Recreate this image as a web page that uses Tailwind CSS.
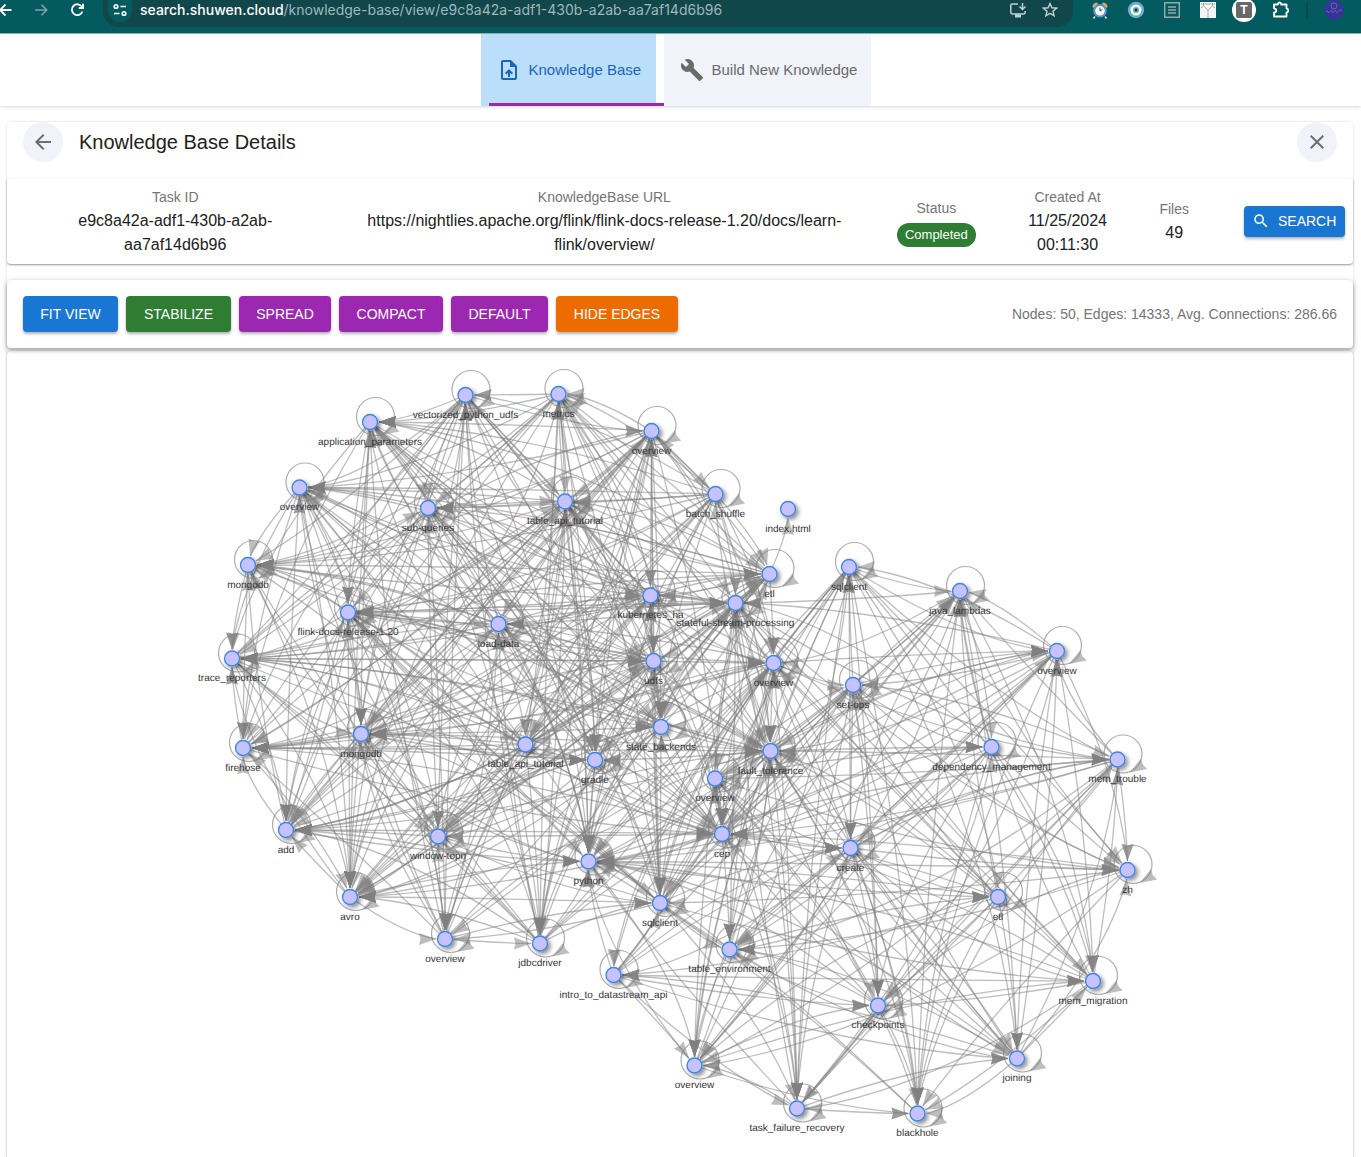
<!DOCTYPE html>
<html lang="en">
<head>
<meta charset="utf-8">
<meta name="viewport" content="width=device-width, initial-scale=1">
<title>Knowledge Base Details</title>
<script src="https://cdn.jsdelivr.net/npm/@tailwindcss/browser@4"></script>
</head>
<body class="min-h-screen overflow-x-hidden bg-white font-['Liberation_Sans',Arial,sans-serif] text-[#212121]">

<!-- Browser toolbar -->
<div class="flex h-[34px] items-start border-b border-[#8fb5b8] bg-[#035a5f] text-white">
  <div class="flex h-5 w-[103px] shrink-0 items-center">
    <button aria-label="Back" class="w-4"><svg class="h-4 w-4" viewBox="0 0 16 16" fill="none" stroke="#fff" stroke-width="1.8"><path d="M11.500 8H0M5.500 2.500 0 8l5.500 5.500"/></svg></button>
    <button aria-label="Forward" class="ml-[17px] w-4"><svg class="h-4 w-4" viewBox="0 0 16 16" fill="none" stroke="#7fa3a5" stroke-width="1.600"><path d="M2 8h11.500M8.500 2.800 13.700 8l-5.200 5.200"/></svg></button>
    <button aria-label="Reload" class="ml-5 w-4"><svg class="h-4 w-4" viewBox="0 0 16 16" fill="none" stroke="#fff" stroke-width="1.800"><path d="M13 5A5.400 5.400 0 1 0 13.400 9.500"/><path d="M14 1.800V6H9.800" /></svg></button>
  </div>
  <div class="flex h-[27px] min-w-0 flex-1 items-start rounded-b-2xl bg-[#11464b] pr-[15px]">
    <button aria-label="Site information" class="ml-[5px] flex h-[22px] w-6 shrink-0 items-end justify-center rounded-b-full bg-[#035a5f] pb-1"><svg class="h-4 w-4" viewBox="0 0 16 16" fill="none" stroke="#fff" stroke-width="1.600"><circle cx="4" cy="4.500" r="1.800"/><path d="M8.500 4.500h5.500M2 11.500h5.500"/><circle cx="12" cy="11.500" r="1.800"/></svg></button>
    <a href="#" class="ml-2 truncate font-['Inter',sans-serif] text-sm leading-5 text-[#9fb8ba]"><span class="font-medium text-white">search.shuwen.cloud</span>/knowledge-base/view/e9c8a42a-adf1-430b-a2ab-aa7af14d6b96</a>
    <div class="ml-auto flex h-5 shrink-0 items-center gap-4">
      <button aria-label="Install app"><svg class="h-4 w-4" viewBox="0 0 16 16" fill="none" stroke="#c3d0d1" stroke-width="1.500"><path d="M8 2H2.200Q.800 2 .800 3.400v7.200Q.800 12 2.200 12h11.600q1.400 0 1.400-1.400V9"/><path d="M5 14h6" stroke-width="3"/><path d="M12.500 1v6M9.500 4.500l3 3 3-3"/></svg></button>
      <button aria-label="Bookmark"><svg class="h-4 w-4" viewBox="0 0 16 16" fill="none" stroke="#c3d0d1" stroke-width="1.400"><path d="m8 1.500 1.900 4.300 4.700.4-3.600 3.100 1.100 4.600L8 11.400l-4.100 2.500L5 9.300 1.400 6.200l4.700-.4z"/></svg></button>
    </div>
  </div>
  <div class="flex h-5 shrink-0 items-center">
    <button aria-label="Alarm extension" class="ml-[18px]"><svg class="h-[18px] w-[18px]" viewBox="0 0 18 18"><path d="M4 15.500 2.500 17.500M14 15.500l1.500 2" stroke="#c9d8ee" stroke-width="1.800"/><path d="M1.500 6Q1.500 2 6 1.500l1 1.500-4 4zM16.500 6q0-4-4.500-4.500L11 3l4 4z" fill="#e9a84d"/><circle cx="9" cy="9.800" r="5.800" fill="#f3f8ff" stroke="#6490cf" stroke-width="2"/><path d="M9 6.500V10l2.400-1.500" fill="none" stroke="#444" stroke-width="1"/></svg></button>
    <button aria-label="Eye extension" class="ml-[18px]"><svg class="h-[18px] w-[18px]" viewBox="0 0 18 18"><circle cx="9" cy="9" r="8.200" fill="#6fa8cc"/><circle cx="9" cy="9" r="5.600" fill="#f4fbfa"/><circle cx="9" cy="9" r="3" fill="#4bb3a0"/><circle cx="9" cy="9" r="1.400" fill="#334"/></svg></button>
    <button aria-label="Reader extension" class="ml-[18px]"><svg class="h-[18px] w-[18px]" viewBox="0 0 18 18" fill="none" stroke="#9aa9aa" stroke-width="1.400"><path d="M1.700 1.700h14.600v14.600H1.700zM5 6h8M5 9h8M5 12h8"/></svg></button>
    <button aria-label="Tree extension" class="ml-[18px]"><svg class="h-[18px] w-[18px]" viewBox="0 0 18 18"><path d="M1 1h16v16H1z" fill="#f5f5f5"/><path d="M9 17V9L4.500 5M9 9l4.500-4M4.500 5 2 7M4.500 5V2M13.500 5l2.500 2M13.500 5V2M2 3h14" fill="none" stroke="#9a9a9a" stroke-width=".8"/></svg></button>
    <button aria-label="Text extension" class="ml-[15px] flex h-6 w-6 items-center justify-center rounded-full bg-white"><span class="flex h-4 w-4 items-center justify-center rounded-xs bg-[#686868] text-xs font-bold text-white">T</span></button>
    <button aria-label="Extensions" class="ml-4"><svg class="h-[18px] w-[18px]" viewBox="0 0 18 18" fill="none" stroke="#fff" stroke-width="1.800"><path d="M2 3.500h3.800q.3-2 1.700-2t1.700 2h5.300v4q1.800.3 1.800 1.900t-1.800 1.900v4.200H2v-3.800q2.300-.4 2.300-2.200T2 7.300z" stroke-linejoin="round"/></svg></button>
    <span class="ml-4 h-4 w-0.5 bg-[#11464b]"></span>
    <button aria-label="Profile" class="mr-[17px] ml-4 flex h-5 w-5 items-center justify-center rounded-full bg-[#34349a]"><svg class="h-5 w-5" viewBox="0 0 20 20" fill="none" stroke="#7772ad" stroke-width=".8"><circle cx="10" cy="6" r="3"/><path d="M2 12q1.500-2 2 0t2-.5 2 0 2 0 2 0 2 0 4-1"/></svg></button>
  </div>
</div>

<!-- Section tabs -->
<nav class="flex h-[72px] justify-center gap-2 pr-2.5 shadow-[0_1px_3px_rgba(0,0,0,0.16)]">
  <div class="relative flex">
    <button class="flex w-[175px] items-center bg-[#bbdefb] pl-4 text-[15px] text-[#1c64bd]">
      <svg class="h-6 w-6" viewBox="0 0 24 24" fill="currentColor"><path d="M14 2H6c-1.100 0-2 .9-2 2v16c0 1.100.9 2 2 2h12c1.100 0 2-.9 2-2V8zm4 18H6V4h7v5h5zM8 15.010l1.410 1.410L11 14.840V19h2v-4.160l1.590 1.590L16 15.010 12.010 11z"/></svg>
      <span class="ml-2">Knowledge Base</span>
    </button>
    <span class="absolute bottom-0 left-2 h-[3px] w-full bg-[#9c27b0]"></span>
  </div>
  <button class="flex w-[207px] items-center bg-[#f0f3f9] pl-4 text-[15px] text-[#6b6b6c]">
    <svg class="h-6 w-6" viewBox="0 0 24 24" fill="currentColor"><path d="m22.700 19-9.100-9.100c.9-2.300.4-5-1.500-6.900-2-2-5-2.400-7.400-1.300L9 6 6 9 1.600 4.700C.4 7.100.9 10.100 2.900 12.100c1.900 1.900 4.600 2.400 6.900 1.500l9.100 9.100c.4.400 1 .4 1.400 0l2.300-2.300c.5-.4.500-1.100.1-1.400z"/></svg>
    <span class="ml-2 whitespace-nowrap">Build New Knowledge</span>
  </button>
</nav>

<main class="mt-4 mr-2 ml-[7px] rounded-t shadow-[0_0_3px_rgba(0,0,0,0.16)]">
  <header class="flex h-14 items-start px-4">
    <button aria-label="Go back" class="flex h-10 w-10 items-center justify-center rounded-full bg-[#f0f3f9]"><svg class="h-6 w-6" viewBox="0 0 24 24" fill="#6e6e6f"><path d="M20 11H7.830l5.590-5.590L12 4l-8 8 8 8 1.410-1.410L7.830 13H20z"/></svg></button>
    <h1 class="ml-4 text-xl leading-10">Knowledge Base Details</h1>
    <button aria-label="Close" class="ml-auto flex h-10 w-10 items-center justify-center rounded-full bg-[#f0f3f9]"><svg class="h-6 w-6" viewBox="0 0 24 24" fill="#6e6e6f"><path d="M19 6.410 17.590 5 12 10.590 6.410 5 5 6.410 10.590 12 5 17.590 6.410 19 12 13.410 17.590 19 19 17.590 13.410 12z"/></svg></button>
  </header>

  <section class="grid h-[86px] grid-cols-[336fr_521fr_142fr_120fr_93fr_132fr] items-center rounded text-center leading-6 shadow-[0_1px_2px_rgba(0,0,0,0.42)]">
    <div class="px-8"><p class="text-sm leading-6 text-[#757575]">Task ID</p><p>e9c8a42a-adf1-430b-a2ab-aa7af14d6b96</p></div>
    <div class="px-4"><p class="text-sm leading-6 text-[#757575]">KnowledgeBase URL</p><p>https://nightlies.apache.org/flink/flink-docs-release-1.20/docs/learn-flink/overview/</p></div>
    <div class="flex flex-col items-center gap-[3px]"><p class="text-sm leading-6 text-[#757575]">Status</p><span class="h-6 rounded-full bg-[#2e7d32] px-2 text-[13px] leading-6 text-white">Completed</span></div>
    <div class="px-5"><p class="text-sm leading-6 text-[#757575]">Created At</p><p>11/25/2024 00:11:30</p></div>
    <div><p class="text-sm leading-6 text-[#757575]">Files</p><p>49</p></div>
    <div class="flex justify-end pr-2"><button class="flex h-[31px] w-[101px] items-center rounded bg-[#1976d2] pl-2 text-sm text-white shadow-[0_2px_3px_rgba(0,0,0,0.3)]">
      <svg class="h-[18px] w-[18px]" viewBox="0 0 24 24" fill="currentColor"><path d="M15.500 14h-.79l-.28-.27C15.410 12.590 16 11.110 16 9.500 16 5.910 13.090 3 9.500 3S3 5.910 3 9.500 5.910 16 9.500 16c1.610 0 3.090-.59 4.230-1.570l.27.28v.79l5 4.990L20.490 19zm-6 0C7.010 14 5 11.990 5 9.500S7.010 5 9.500 5 14 7.010 14 9.500 11.990 14 9.500 14z"/></svg>
      <span class="ml-2">SEARCH</span></button></div>
  </section>

  <section class="mt-4 flex h-[68px] items-center gap-2 rounded px-4 text-sm text-white shadow-[0_2px_4px_rgba(0,0,0,0.35),0_1px_8px_rgba(0,0,0,0.1)]">
    <button class="h-9 w-[95px] rounded bg-[#1976d2] shadow-[0_2px_3px_rgba(0,0,0,0.3)]">FIT VIEW</button>
    <button class="h-9 w-[105px] rounded bg-[#2e7d32] shadow-[0_2px_3px_rgba(0,0,0,0.3)]">STABILIZE</button>
    <button class="h-9 w-[92px] rounded bg-[#9c27b0] shadow-[0_2px_3px_rgba(0,0,0,0.3)]">SPREAD</button>
    <button class="h-9 w-[104px] rounded bg-[#9c27b0] shadow-[0_2px_3px_rgba(0,0,0,0.3)]">COMPACT</button>
    <button class="h-9 w-[97px] rounded bg-[#9c27b0] shadow-[0_2px_3px_rgba(0,0,0,0.3)]">DEFAULT</button>
    <button class="h-9 w-[122px] rounded bg-[#ed6c02] shadow-[0_2px_3px_rgba(0,0,0,0.3)]">HIDE EDGES</button>
    <p class="ml-auto text-[#757575]">Nodes: 50, Edges: 14333, Avg. Connections: 286.66</p>
  </section>

  <svg id="graph" class="mt-[3px] block w-full rounded-t font-['Liberation_Sans',Arial,sans-serif] text-[10px] shadow-[0_0_2px_rgba(0,0,0,0.3)]" viewBox="7 351 1346 806" role="img" aria-label="Knowledge graph">
    <defs><filter id="soft" x="-50%" y="-50%" width="220%" height="220%"><feDropShadow dx="2.500" dy="2.500" stdDeviation="2" flood-color="#000" flood-opacity=".45"/></filter></defs>
  </svg>
</main>

<script>
// name, x, y, group (L left, R right, B both), share of edges that point at the node
const nodes = [
  ['vectorized_python_udfs',465.500,395,'L',.4],['metrics',558.500,394,'L',.15],['application_parameters',370,422,'L',.4],
  ['overview',651.500,431,'L',.2],['overview',299.500,487.500,'L',.4],['sub-queries',428,508,'L',.6],['table_api_tutorial',565,501.500,'L',.5],
  ['batch_shuffle',715.500,494,'L',.01],['index.html',788,509,'N',0],['mongodb',248,565,'L',.8],['etl',769.500,574,'L',.25],
  ['sqlclient',849,567,'R',.1],['java_lambdas',960,591,'R',.6],['kubernetes_ha',650.500,595.500,'L',.6],
  ['stateful-stream-processing',735.500,603,'B',.5],['flink-docs-release-1.20',348,612.500,'L',.8],['load-data',498.500,624,'L',.5],
  ['overview',1057,651,'R',.3],['trace_reporters',232,658.500,'L',.7],['udfs',653.500,661,'L',.6],['overview',773.500,663,'B',.5],
  ['set-ops',853,685,'R',.3],['state_backends',661,727,'L',.5],['mongodb',361,734,'L',1.100],['firehose',243,748,'L',1],
  ['table_api_tutorial',525.500,744.500,'L',.03],['fault_tolerance',770.500,751,'B',.55],['dependency_management',991.500,747,'R',.6],
  ['gradle',595,760,'L',.5],['mem_trouble',1117.500,759.500,'R',.4],['overview',715,778.500,'R',.2],['add',286,830,'L',1],
  ['window-topn',438,836.500,'L',.3],['cep',722,834,'B',.6],['create',850.500,848,'R',.5],['python',588.500,861.500,'B',8],
  ['zh',1127.500,870,'R',.9],['avro',350,897,'L',1.600],['etl',998,897,'R',.25],['sqlclient',660,903,'B',.3],['overview',445,939,'L',.15],
  ['jdbcdriver',540,943.500,'L',.25],['table_environment',729.500,949.500,'R',.9],['intro_to_datastream_api',613.500,975,'R',.2],
  ['mem_migration',1093,981,'R',.65],['checkpoints',878,1005.500,'R',.5],['joining',1017,1058.500,'R',.7],
  ['overview',694.500,1065.500,'R',1],['task_failure_recovery',797,1108.500,'R',.6],['blackhole',917.500,1113.500,'R',1.200]
];
let seed = 20241125;
const rnd = () => { seed = (seed * 1664525 + 1013904223) % 4294967296; return seed / 4294967296; };
const svg = document.getElementById('graph');
const add = (tag, attrs, text) => {
  const e = document.createElementNS('http://www.w3.org/2000/svg', tag);
  for (const k in attrs) e.setAttribute(k, attrs[k]);
  if (text) e.textContent = text;
  svg.appendChild(e);
};
const arrow = (x, y, a) => {
  const p = (d, w) => (x - d * Math.cos(a) - w * Math.sin(a)) + ',' + (y - d * Math.sin(a) + w * Math.cos(a));
  add('polygon', {points: [x + ',' + y, p(17, 6), p(15.500, 0), p(17, -6)].join(' '), fill: '#808080', 'fill-opacity': .52});
};
// quadratic curve that leaves at 45 degrees and settles on the target's axis
function edge(f, t) {
  const dx = t[1] - f[1], dy = t[2] - f[2], ax = Math.abs(dx), ay = Math.abs(dy), s = Math.max(ax, ay) * .55;
  const vx = f[1] + Math.sign(dx) * (ax <= ay ? Math.min(s, ax) : s);
  const vy = f[2] + Math.sign(dy) * (ax <= ay ? s : Math.min(s, ay));
  const a = Math.atan2(t[2] - vy, t[1] - vx), ex = t[1] - 9 * Math.cos(a), ey = t[2] - 9 * Math.sin(a);
  // pull the control point part of the way back to the straight line
  const cx = vx * .7 + (f[1] + t[1]) * .15, cy = vy * .7 + (f[2] + t[2]) * .15;
  add('path', {d: `M${f[1]} ${f[2]}Q${cx} ${cy} ${ex} ${ey}`, fill: 'none', stroke: '#808080', 'stroke-opacity': .52, 'stroke-width': 1.300});
  arrow(ex, ey, a);
}
for (let i = 0; i < nodes.length; i++) for (let j = i + 1; j < nodes.length; j++) {
  const a = nodes[i], b = nodes[j];
  if (a[3] === 'N' || b[3] === 'N') continue;
  const same = a[3] === b[3] || a[3] === 'B' || b[3] === 'B';
  const near = Math.hypot(a[1] - b[1], a[2] - b[2]) < 560;
  if (!same || !near || rnd() > .82) continue;
  const toB = rnd() < b[4] / (a[4] + b[4]);
  edge(toB ? a : b, toB ? b : a);
  if (rnd() < .1) edge(toB ? b : a, toB ? a : b);
}
edge(nodes[10], nodes[8]);
for (const n of nodes) {
  if (n[3] === 'N') continue;
  add('circle', {cx: n[1] + 5.500, cy: n[2] - 5.500, r: 19, fill: 'none', stroke: '#808080', 'stroke-opacity': .65, 'stroke-width': 1.200});
  arrow(n[1] + 12, n[2] + 13, 2.600);
}
for (const n of nodes) {
  add('circle', {cx: n[1], cy: n[2], r: 7.500, fill: '#c5c2fd', stroke: '#3d85ea', 'stroke-width': 1.300, filter: 'url(#soft)'});
  add('text', {x: n[1], y: n[2] + 22.500, 'text-anchor': 'middle', fill: '#343434', 'text-rendering': 'geometricPrecision'}, n[0]);
}
</script>
</body>
</html>
